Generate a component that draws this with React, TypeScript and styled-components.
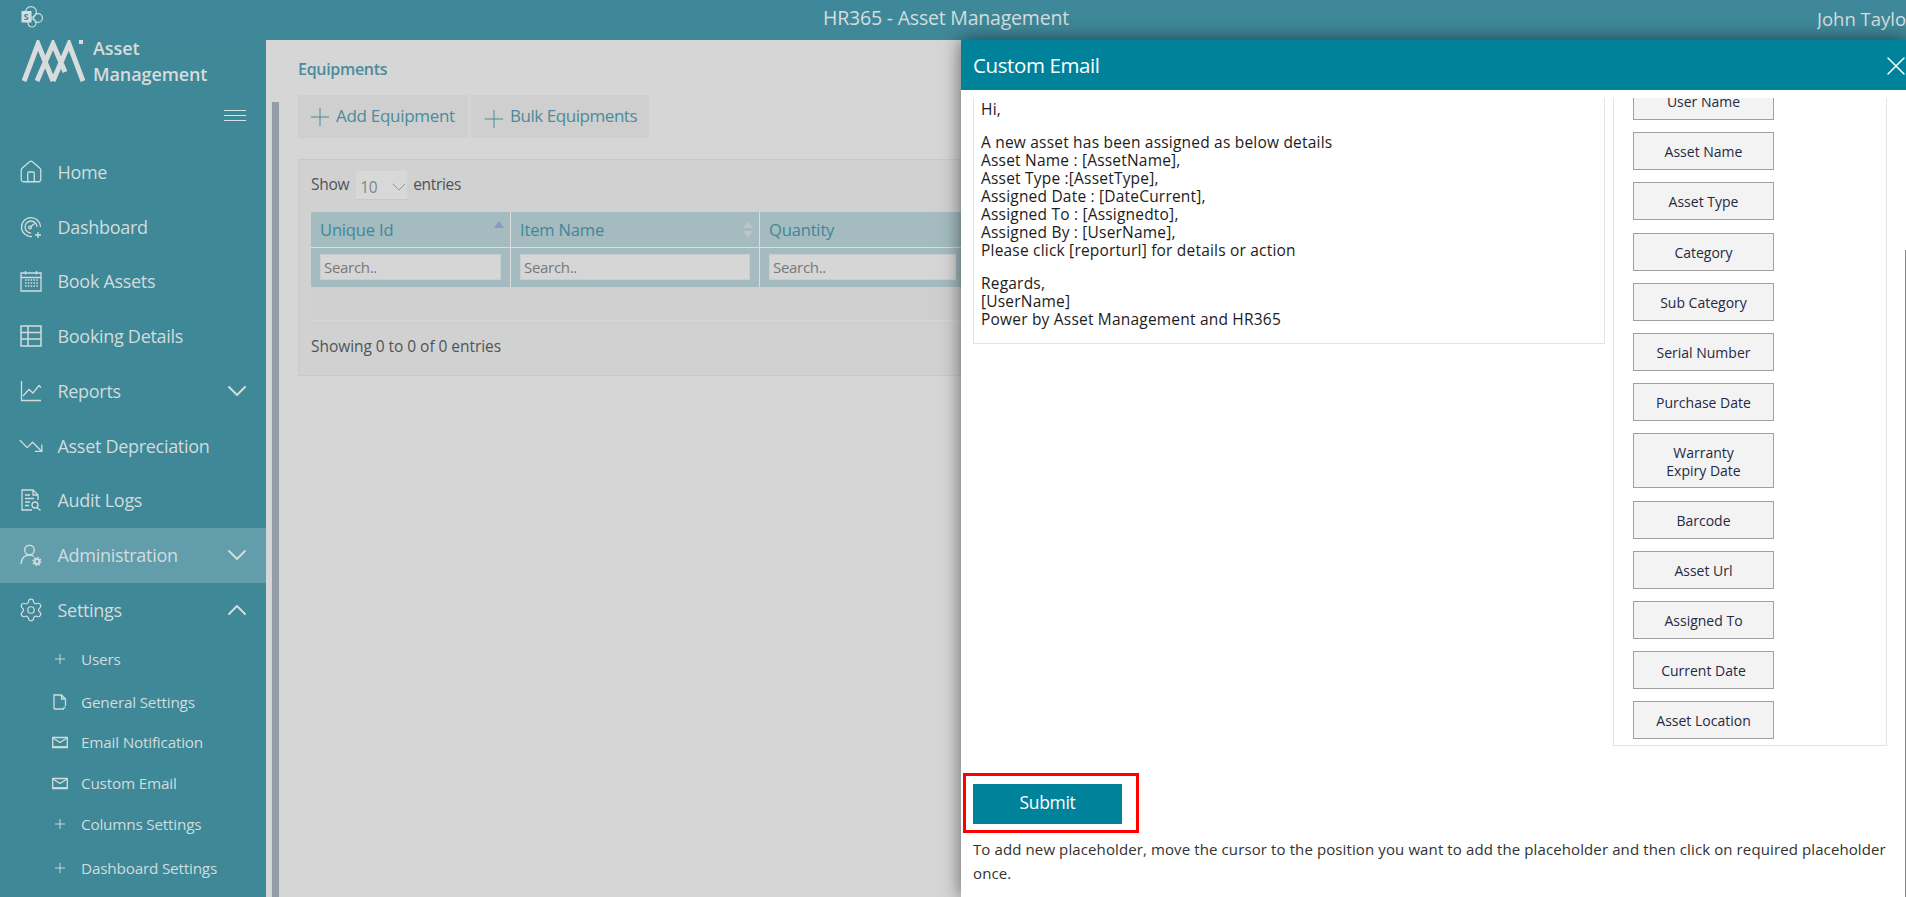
import React from "react";
import styled, { createGlobalStyle, css } from "styled-components";
import { House, Settings, Plus, X, TrendingDown, ChevronDown, ChevronUp } from "lucide-react";

const Global = createGlobalStyle`
  html, body { margin: 0; padding: 0; width: 100%; height: 100%; overflow: hidden; }
  body { font-family: "Open Sans", "Noto Sans", sans-serif; }
  * { box-sizing: border-box; }
`;

const Page = styled.div`
  position: relative;
  width: 1906px;
  height: 897px;
  overflow: hidden;
  display: flex;
  flex-direction: column;
  background: #d6d6d6;
`;
const TopBar = styled.header`
  height: 40px;
  flex: none;
  background: #3f8899;
  color: #d5dede;
  display: grid;
  grid-template-columns: 802px auto 1fr;
  align-items: center;
  padding: 0 0 6px 21px;
  overflow: hidden;
`;
const Title = styled.div`
  font-size: 19.5px;
  letter-spacing: -0.2px;
`;
const User = styled.div`
  justify-self: end;
  font-size: 18.5px;
  white-space: nowrap;
  width: 89px;
  overflow: hidden;
  margin-top: 3px;
`;
const Body = styled.div`
  flex: 1;
  display: flex;
  min-height: 0;
`;
const Sidebar = styled.aside`
  width: 266px;
  flex: none;
  background: #3e8898;
  color: #d2dcdc;
  display: flex;
  flex-direction: column;
`;
const Brand = styled.div`
  height: 104.5px;
  flex: none;
  position: relative;
  display: flex;
  align-items: flex-start;
  padding: 0 0 0 22px;
  gap: 8px;
`;
const BrandText = styled.div`
  font-size: 18px;
  font-weight: 600;
  line-height: 26px;
  margin-top: -5px;
  letter-spacing: -0.1px;
  color: #d8dcdc;
`;
const Burger = styled.div`
  position: absolute;
  left: 224px;
  top: 70px;
  width: 22px;
  height: 11px;
  border-top: 1px solid #d8e2e2;
  border-bottom: 1px solid #d8e2e2;
  &::before {
    content: "";
    display: block;
    height: 1px;
    margin-top: 4px;
    background: #d8e2e2;
  }
`;
const NavRow = styled.div<{ $active?: boolean }>`
  height: 54.75px;
  flex: none;
  display: flex;
  align-items: center;
  padding: 0 13px 0 20px;
  font-size: 18px;
  letter-spacing: -0.3px;
  background: ${(p) => (p.$active ? "#629dac" : "transparent")};
  & > svg:first-child {
    width: 22px;
    height: 22px;
    flex: none;
    margin-right: 15.5px;
  }
  & > span {
    flex: 1;
  }
`;
const bigIcon = css`
  &&& {
    width: 26px;
    height: 26px;
    margin: -2px 13.5px -2px -2px;
  }
`;
const BigHouse = styled(House)`${bigIcon}`;
const BigTrend = styled(TrendingDown)`${bigIcon}`;
const BigGear = styled(Settings)`${bigIcon}`;
const chevron = css`
  margin: -8px 0;
  flex: none;
`;
const Down = styled(ChevronDown)`${chevron}`;
const Up = styled(ChevronUp)`${chevron}`;
const SubRow = styled.div<{ $h: number }>`
  height: ${(p) => p.$h}px;
  flex: none;
  display: flex;
  align-items: center;
  padding-left: 52px;
  font-size: 15.3px;
  letter-spacing: -0.2px;
  & > svg {
    width: 16px;
    height: 16px;
    margin-right: 13px;
    flex: none;
  }
`;
const Gutter = styled.div`
  width: 13px;
  flex: none;
  padding: 62px 0 0 6px;
  &::before {
    content: "";
    display: block;
    width: 7px;
    height: 100%;
    background: #959ea6;
  }
`;
const Main = styled.main`
  flex: 1;
  min-width: 0;
  padding: 20px 0 0 19px;
  overflow: hidden;
`;
const Heading = styled.h2`
  margin: 0 0 17px;
  font-size: 16px;
  font-weight: 600;
  line-height: 18px;
  letter-spacing: -0.3px;
  color: #4a8c9b;
`;
const Actions = styled.div`
  display: flex;
  gap: 3px;
  margin-bottom: 21px;
`;
const ActionButton = styled.div<{ $w: number; $drop?: boolean }>`
  width: ${(p) => p.$w}px;
  height: 43px;
  background: #cfcfcf;
  color: #4a8c9b;
  display: flex;
  align-items: center;
  padding: 0 0 2px ${(p) => (p.$drop ? 8 : 7)}px;
  font-size: 17px;
  letter-spacing: ${(p) => (p.$drop ? -0.45 : -0.3)}px;
  white-space: nowrap;
  & > svg {
    width: 30px;
    height: 30px;
    margin-right: 1px;
    margin-top: ${(p) => (p.$drop ? 6 : 2)}px;
    flex: none;
  }
`;
const Card = styled.section`
  width: 680px;
  height: 217px;
  background: #d1d1d1;
  border: 1px solid #c9c9c9;
  padding: 9px 12px 0;
`;
const ShowRow = styled.div`
  height: 30px;
  display: flex;
  align-items: center;
  font-size: 15.5px;
  letter-spacing: -0.3px;
  color: #4f5457;
  margin-bottom: 13px;
`;
const SelectBox = styled.div`
  width: 51px;
  height: 29px;
  margin: 2px 6px 0 7px;
  background: #d8d8d8;
  border-bottom: 1px solid #c8c8c8;
  display: flex;
  align-items: center;
  justify-content: space-between;
  padding: 4px 0 0 4px;
  color: #7e8486;
  font-size: 15.5px;
  & > svg {
    width: 24px;
    height: 24px;
    margin-right: -4px;
    stroke-width: 0.8;
  }
`;
const TableGrid = styled.div`
  display: grid;
  grid-template-columns: 200px 249px 206px;
  grid-template-rows: 36px 39px;
  background: #a4bbc0;
  width: 655px;
`;
const HeadCell = styled.div`
  position: relative;
  display: flex;
  align-items: center;
  padding: 0 0 0 9px;
  font-size: 16.5px;
  letter-spacing: -0.15px;
  color: #3f8899;
  border-right: 1px solid #dcdcdc;
  border-bottom: 1px solid #dcdcdc;
`;
const SortIcon = styled.svg`
  position: absolute;
  right: 6px;
  top: 8px;
  width: 10px;
  height: 19px;
`;
const FilterCell = styled.div`
  padding: 6px 9px 6px 9px;
  border-right: 1px solid #dcdcdc;
`;
const SearchBox = styled.div`
  height: 26px;
  background: #d6d6d6;
  border: 1px solid #c8cfd1;
  color: #77797a;
  font-size: 15px;
  letter-spacing: -0.3px;
  display: flex;
  align-items: center;
  padding-left: 3px;
`;
const EmptyRow = styled.div`
  height: 34px;
  width: 655px;
  background: #cfcfcf;
  border-bottom: 1px solid #d6d6d6;
`;
const Info = styled.div`
  margin-top: 15px;
  font-size: 15.5px;
  letter-spacing: -0.05px;
  line-height: 20px;
  color: #4f5457;
`;
const Drawer = styled.aside`
  position: absolute;
  top: 40px;
  left: 961px;
  right: 0;
  bottom: 0;
  background: #fff;
  box-shadow: 0 0 18px rgba(0, 0, 0, 0.55);
  display: flex;
  flex-direction: column;
`;
const DrawerHead = styled.div`
  height: 50px;
  flex: none;
  background: #00829b;
  color: #fff;
  display: flex;
  align-items: center;
  justify-content: space-between;
  padding: 0 0 0 12px;
  font-size: 20.5px;
  letter-spacing: -0.4px;
  & > svg {
    width: 32px;
    height: 32px;
    stroke-width: 1.1;
    margin: 2px -6px 0 0;
  }
`;
const Columns = styled.div`
  flex: none;
  height: 648px;
  margin-top: 8px;
  margin-left: 12px;
  display: flex;
  gap: 8px;
`;
const EditorBox = styled.div`
  width: 632px;
  height: 246px;
  border: 1px solid #e4e4e4;
  border-top: none;
  padding: 2px 7px;
  font-size: 15.5px;
  line-height: 18px;
  color: #1c1c1c;
  letter-spacing: 0.2px;
  & p {
    margin: 0 0 15px;
  }
`;
const PlaceholderBox = styled.div`
  width: 274px;
  height: 648px;
  border: 1px solid #e4e4e4;
  border-top: none;
  overflow: hidden;
  padding: 0 0 0 19px;
  display: flex;
  flex-direction: column;
  align-items: flex-start;
  gap: 12.2px;
`;
const PlaceholderButton = styled.div<{ $tall?: boolean; $clip?: boolean }>`
  width: 141px;
  height: ${(p) => (p.$tall ? 55 : 38)}px;
  flex: none;
  margin-top: ${(p) => (p.$clip ? -16 : 0)}px;
  padding-top: 2px;
  background: #f3f3f3;
  border: 1px solid #a0a0a0;
  color: #1f2a44;
  font-size: 14px;
  font-weight: 500;
  line-height: 18px;
  text-align: center;
  display: flex;
  align-items: center;
  justify-content: center;
`;
const Footer = styled.div`
  position: relative;
  padding: 38px 0 0 12px;
`;
const SubmitButton = styled.div`
  width: 149px;
  height: 40px;
  padding-bottom: 4px;
  background: #00829b;
  color: #fff;
  font-size: 17.5px;
  letter-spacing: -0.3px;
  display: flex;
  align-items: center;
  justify-content: center;
`;
const Callout = styled.div`
  position: absolute;
  left: 2px;
  top: 27px;
  width: 176px;
  height: 60px;
  border: 3px solid #f00;
  pointer-events: none;
`;
const Note = styled.p`
  margin: 13px 0 0;
  font-size: 15px;
  line-height: 24px;
  letter-spacing: 0.11px;
  color: #323232;
  white-space: nowrap;
`;
const ScrollEdge = styled.div`
  position: absolute;
  right: 0;
  top: 250px;
  bottom: 0;
  width: 1px;
  background: #888;
`;

const s = { fill: "none", stroke: "currentColor", strokeWidth: 1.3 } as const;
const SharePoint = () => (
  <svg width="22" height="22" viewBox="0 0 22 22">
    <circle cx="10" cy="6" r="5.4" fill="none" stroke="#d5dede" strokeWidth="1.2" />
    <circle cx="17" cy="12" r="4.4" fill="none" stroke="#d5dede" strokeWidth="1.2" />
    <circle cx="11" cy="17" r="4" fill="none" stroke="#d5dede" strokeWidth="1.2" />
    <rect x="0.5" y="5" width="10" height="11.5" fill="#d5dede" />
    <text x="2.5" y="14" fontSize="9.5" fontWeight="700" fill="#3f8899" fontFamily="Open Sans">S</text>
  </svg>
);
const Logo = () => (
  <svg width="63" height="42" viewBox="0 0 63 42" style={{ flex: "none" }}>
    <path d="M2 41 L16 4 L31 41 M15 41 L31 4 L43 32 M31 41 L47 4 L61 41" fill="none" stroke="#d8dcdc" strokeWidth="5" />
    <rect x="57" y="0" width="4" height="4" fill="#d8dcdc" />
  </svg>
);
const Dash = () => (
  <svg viewBox="0 0 22 22">
    <path {...s} d="M12 20.5 A9.5 9.5 0 1 1 20.5 11" />
    <path {...s} d="M11 17 A6 6 0 1 1 17 11" />
    <circle {...s} cx="10" cy="11.5" r="1.4" />
    <path {...s} d="M11 10.5 L14.5 7.5 M18 16 v6 M15 19 h6" />
  </svg>
);
const Cal = () => (
  <svg viewBox="0 0 22 22">
    <path {...s} d="M1 3 H21 V21 H1 Z M1 7.5 H21 M5.5 1 V4.5 M16.5 1 V4.5" />
    <path d="M5 10 H18 M5 13 H18 M5 16 H18" fill="none" stroke="currentColor" strokeWidth="1.6" strokeDasharray="1.6 1.2" />
  </svg>
);
const Tbl = () => (
  <svg viewBox="0 0 22 22">
    <path {...s} strokeWidth="1.5" d="M1 1 H21 V21 H1 Z M1 7.5 H21 M1 14 H21 M8 1 V21" />
  </svg>
);
const Chart = () => (
  <svg viewBox="0 0 22 22">
    <path {...s} d="M1.5 1 V20.5 H21 M3 16 L9 9.5 L13 13 L19 5.5 L21 7.5" />
  </svg>
);
const Audit = () => (
  <svg viewBox="0 0 22 22">
    <path {...s} d="M12 21 H2 V1 H13 L18 6 V11 M13 1 V6 H18" />
    <path {...s} strokeWidth="1.6" d="M5 6 H10 M5 9.5 H14 M5 13 H10 M5 16.5 H9" />
    <circle {...s} cx="15" cy="16" r="3" />
    <path {...s} d="M17 18.5 L20.5 21.5" />
  </svg>
);
const Admin = () => (
  <svg viewBox="0 0 22 22">
    <circle {...s} strokeWidth="1.4" cx="9.5" cy="6" r="4.8" />
    <path {...s} strokeWidth="1.4" d="M1 20 C1.5 14 5 11 9.5 11 C11 11 12.5 11.5 14 12.5" />
    <circle cx="17" cy="17.5" r="2.4" fill="none" stroke="currentColor" strokeWidth="2" />
    <circle cx="17" cy="17.5" r="4" fill="none" stroke="currentColor" strokeWidth="1.4" strokeDasharray="1.6 1.5" />
  </svg>
);
const DocIcon = () => (
  <svg viewBox="0 0 16 16">
    <path {...s} d="M2 15 V1 H9.5 L13.5 5 V12 M9.5 1 V5 H13.5 M2 15 H12 M11.5 13.5 L13.5 13.5" />
  </svg>
);
const Mail = () => (
  <svg viewBox="0 0 16 16">
    <path {...s} d="M0.7 3.5 H15.3 V13.5 H0.7 Z" />
    <path {...s} d="M1 4 L8 8.5 L15 4" />
    <path d="M0.7 13 H15.3" stroke="currentColor" strokeWidth="1.8" />
  </svg>
);
const Sort = ({ active }: { active?: boolean }) => (
  <SortIcon viewBox="0 0 10 19">
    <path d="M5 1 L10 8 H0 Z" fill={active ? "#8f97c9" : "#bcc5c7"} />
    {!active && <path d="M5 18 L10 11 H0 Z" fill="#bcc5c7" />}
  </SortIcon>
);

const lines = ["A new asset has been assigned as below details", "Asset Name : [AssetName],", "Asset Type :[AssetType],", "Assigned Date : [DateCurrent],", "Assigned To : [Assignedto],", "Assigned By : [UserName],", "Please click [reporturl] for details or action"];
const placeholders = ["Asset Name", "Asset Type", "Category", "Sub Category", "Serial Number", "Purchase Date"];
const placeholders2 = ["Barcode", "Asset Url", "Assigned To", "Current Date", "Asset Location"];

export default function App() {
  return (
    <Page>
      <Global />
      <TopBar>
        <SharePoint />
        <Title>HR365 - Asset Management</Title>
        <User>John Taylor</User>
      </TopBar>
      <Body>
        <Sidebar>
          <Brand>
            <Logo />
            <BrandText>Asset<br />Management</BrandText>
            <Burger />
          </Brand>
          <NavRow><BigHouse strokeWidth={1.2} /><span>Home</span></NavRow>
          <NavRow><Dash /><span>Dashboard</span></NavRow>
          <NavRow><Cal /><span>Book Assets</span></NavRow>
          <NavRow><Tbl /><span>Booking Details</span></NavRow>
          <NavRow><Chart /><span>Reports</span><Down size={32} strokeWidth={1.5} /></NavRow>
          <NavRow><BigTrend strokeWidth={1.2} /><span>Asset Depreciation</span></NavRow>
          <NavRow><Audit /><span>Audit Logs</span></NavRow>
          <NavRow $active><Admin /><span>Administration</span><Down size={32} strokeWidth={1.5} /></NavRow>
          <NavRow><BigGear strokeWidth={1.1} /><span>Settings</span><Up size={32} strokeWidth={1.5} /></NavRow>
          <SubRow $h={43}><Plus strokeWidth={1.4} />Users</SubRow>
          <SubRow $h={44}><DocIcon />General Settings</SubRow>
          <SubRow $h={36}><Mail />Email Notification</SubRow>
          <SubRow $h={46}><Mail />Custom Email</SubRow>
          <SubRow $h={36}><Plus strokeWidth={1.4} />Columns Settings</SubRow>
          <SubRow $h={52}><Plus strokeWidth={1.4} />Dashboard Settings</SubRow>
        </Sidebar>
        <Gutter />
        <Main>
          <Heading>Equipments</Heading>
          <Actions>
            <ActionButton $w={170}><Plus strokeWidth={0.8} />Add Equipment</ActionButton>
            <ActionButton $w={178} $drop><Plus strokeWidth={0.8} />Bulk Equipments</ActionButton>
          </Actions>
          <Card>
            <ShowRow>Show<SelectBox>10<ChevronDown /></SelectBox>entries</ShowRow>
            <TableGrid>
              <HeadCell>Unique Id<Sort active /></HeadCell>
              <HeadCell>Item Name<Sort /></HeadCell>
              <HeadCell>Quantity</HeadCell>
              <FilterCell><SearchBox>Search..</SearchBox></FilterCell>
              <FilterCell><SearchBox>Search..</SearchBox></FilterCell>
              <FilterCell><SearchBox>Search..</SearchBox></FilterCell>
            </TableGrid>
            <EmptyRow />
            <Info>Showing 0 to 0 of 0 entries</Info>
          </Card>
        </Main>
      </Body>
      <Drawer>
        <DrawerHead>Custom Email<X /></DrawerHead>
        <Columns>
          <EditorBox>
            <p>Hi,</p>
            <p>{lines.map((l) => <React.Fragment key={l}>{l}<br /></React.Fragment>)}</p>
            <p>Regards,<br />[UserName]<br />Power by Asset Management and HR365</p>
          </EditorBox>
          <PlaceholderBox>
            <PlaceholderButton $clip>User Name</PlaceholderButton>
            {placeholders.map((t) => <PlaceholderButton key={t}>{t}</PlaceholderButton>)}
            <PlaceholderButton $tall>Warranty<br />Expiry Date</PlaceholderButton>
            {placeholders2.map((t) => <PlaceholderButton key={t}>{t}</PlaceholderButton>)}
          </PlaceholderBox>
        </Columns>
        <Footer>
          <SubmitButton>Submit</SubmitButton>
          <Callout />
          <Note>To add new placeholder, move the cursor to the position you want to add the placeholder and then click on required placeholder<br />once.</Note>
        </Footer>
      </Drawer>
      <ScrollEdge />
    </Page>
  );
}
